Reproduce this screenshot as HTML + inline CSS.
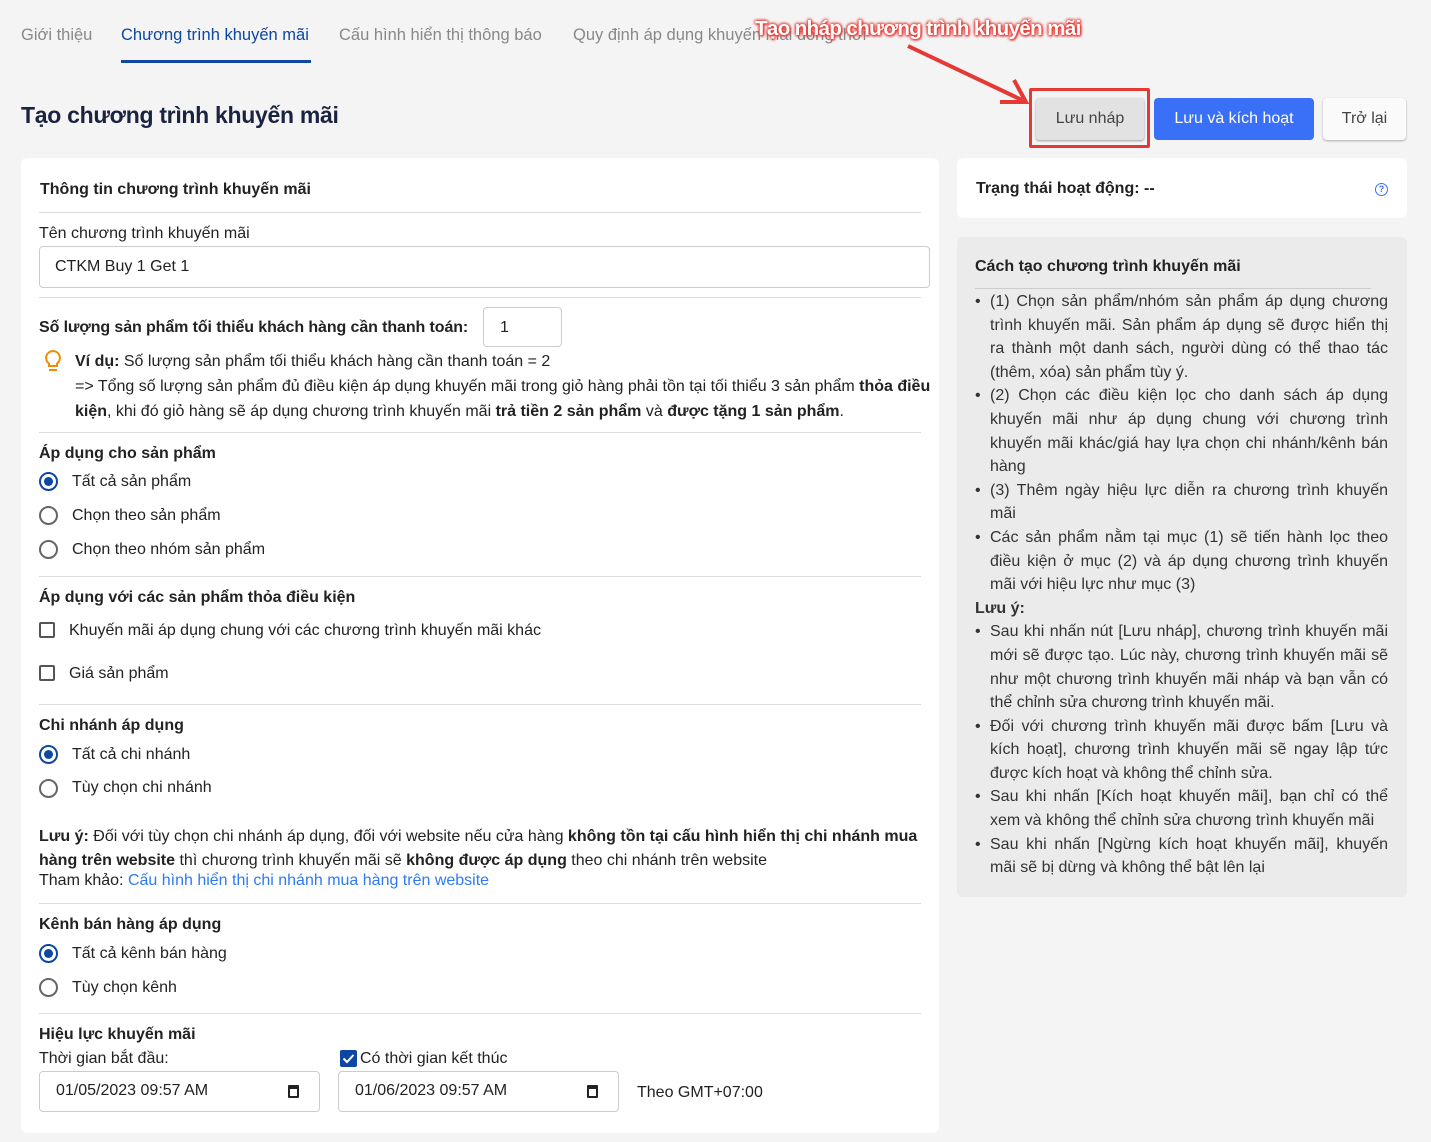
<!DOCTYPE html>
<html><head><meta charset="utf-8"><style>
*{box-sizing:border-box;margin:0;padding:0}
body{width:1431px;height:1142px;background:#f4f4f4;font-family:"Liberation Sans",sans-serif;color:#222;position:relative;overflow:hidden;font-size:16px}
.a{position:absolute;white-space:nowrap}
.b{font-weight:bold}
.card{position:absolute;background:#fff;border-radius:6px}
.hr{position:absolute;height:1px;background:#ddd}
.radio{position:absolute;width:19px;height:19px;border:2px solid #666;border-radius:50%}
.radio.on{border-color:#0d47a1}
.radio.on:after{content:"";position:absolute;left:3px;top:3px;width:9px;height:9px;border-radius:50%;background:#0d47a1}
.chk{position:absolute;width:16px;height:16px;border:2px solid #555;border-radius:2px}
.inp{position:absolute;border:1px solid #ccc;border-radius:4px;background:#fff}
.guide{position:absolute;left:975px;width:413px;font-size:16px;line-height:23.6px;text-align:justify;color:#333}
.guide li{list-style:none;position:relative;padding-left:15px}
.guide li:before{content:"•";position:absolute;left:0}
</style></head><body>
<div class="a" style="left:21px;top:26px;color:#888;font-size:16.5px">Giới thiệu</div>
<div class="a" style="left:121px;top:26px;color:#0d47a1;font-size:16.5px">Chương trình khuyến mãi</div>
<div style="position:absolute;left:121px;top:60px;width:190px;height:3px;background:#0d47a1"></div>
<div class="a" style="left:339px;top:26px;color:#888;font-size:16.5px">Cấu hình hiển thị thông báo</div>
<div class="a" style="left:573px;top:26px;color:#888;font-size:16.5px">Quy định áp dụng khuyến mãi đồng thời</div>
<div class="a" style="left:755px;top:17px;color:#fff;font-size:20.5px;font-weight:bold;text-shadow:0 0 3px #e53935,0 0 3px #e53935,0 0 3px #e53935,1px 1px 2px #e53935;letter-spacing:-0.6px">Tạo nháp chương trình khuyến mãi</div>
<svg style="position:absolute;left:900px;top:40px" width="140" height="70"><line x1="8" y1="6" x2="122" y2="60" stroke="#e53935" stroke-width="4"/><polyline points="100,62 126,62 114,40" fill="none" stroke="#e53935" stroke-width="4"/></svg>
<div class="a" style="left:21px;top:102px;font-size:23px;font-weight:bold;color:#1a2340;letter-spacing:-0.3px">Tạo chương trình khuyến mãi</div>
<div style="position:absolute;left:1029px;top:88px;width:121px;height:60px;border:3px solid #e53935;border-radius:2px"></div>
<div style="position:absolute;left:1036px;top:98px;width:108px;height:42px;background:#e2e2e2;border-radius:3px;box-shadow:0 1px 2px #999;text-align:center;line-height:42px;font-size:16px;color:#444">Lưu nháp</div>
<div style="position:absolute;left:1154px;top:98px;width:160px;height:42px;background:#3a6ff7;border-radius:4px;text-align:center;line-height:42px;font-size:16px;color:#fff">Lưu và kích hoạt</div>
<div style="position:absolute;left:1323px;top:98px;width:83px;height:42px;background:#fafafa;border-radius:4px;box-shadow:0 1px 2px #aaa;text-align:center;line-height:42px;font-size:16px;color:#444">Trở lại</div>

<div class="card" style="left:21px;top:158px;width:918px;height:975px"></div>
<div class="a b" style="left:40px;top:181px">Thông tin chương trình khuyến mãi</div>
<div class="hr" style="left:39px;top:212px;width:882px"></div>
<div class="a" style="left:39px;top:225px">Tên chương trình khuyến mãi</div>
<div class="inp" style="left:39px;top:246px;width:891px;height:42px"></div>
<div class="a" style="left:55px;top:258px">CTKM Buy 1 Get 1</div>
<div class="hr" style="left:39px;top:297px;width:882px"></div>
<div class="a b" style="left:39px;top:319px;font-size:16px;letter-spacing:-0.1px">Số lượng sản phẩm tối thiểu khách hàng cần thanh toán:</div>
<div class="inp" style="left:483px;top:307px;width:79px;height:40px"></div>
<div class="a" style="left:500px;top:319px">1</div>
<svg style="position:absolute;left:42px;top:348px" width="22" height="26"><path d="M11 3a7 7 0 0 0-4 12.7V18h8v-2.3A7 7 0 0 0 11 3z" fill="none" stroke="#f08c00" stroke-width="2"/><line x1="7" y1="22" x2="15" y2="22" stroke="#f08c00" stroke-width="2"/></svg>
<div class="a" style="left:75px;top:349px;line-height:25px;font-size:16px"><b>Ví dụ:</b> Số lượng sản phẩm tối thiểu khách hàng cần thanh toán = 2<br>=&gt; Tổng số lượng sản phẩm đủ điều kiện áp dụng khuyến mãi trong giỏ hàng phải tồn tại tối thiểu 3 sản phẩm <b>thỏa điều</b><br><b>kiện</b>, khi đó giỏ hàng sẽ áp dụng chương trình khuyến mãi <b>trả tiền 2 sản phẩm</b> và <b>được tặng 1 sản phẩm</b>.</div>
<div class="hr" style="left:39px;top:432px;width:882px"></div>
<div class="a b" style="left:39px;top:445px;font-size:16px">Áp dụng cho sản phẩm</div>
<div class="radio on" style="left:39px;top:472px"></div><div class="a" style="left:72px;top:473px">Tất cả sản phẩm</div>
<div class="radio" style="left:39px;top:506px"></div><div class="a" style="left:72px;top:507px">Chọn theo sản phẩm</div>
<div class="radio" style="left:39px;top:540px"></div><div class="a" style="left:72px;top:541px">Chọn theo nhóm sản phẩm</div>
<div class="hr" style="left:39px;top:576px;width:882px"></div>
<div class="a b" style="left:39px;top:589px;font-size:16px">Áp dụng với các sản phẩm thỏa điều kiện</div>
<div class="chk" style="left:39px;top:622px"></div><div class="a" style="left:69px;top:622px">Khuyến mãi áp dụng chung với các chương trình khuyến mãi khác</div>
<div class="chk" style="left:39px;top:665px"></div><div class="a" style="left:69px;top:665px">Giá sản phẩm</div>
<div class="hr" style="left:39px;top:704px;width:882px"></div>
<div class="a b" style="left:39px;top:717px;font-size:16px">Chi nhánh áp dụng</div>
<div class="radio on" style="left:39px;top:745px"></div><div class="a" style="left:72px;top:746px">Tất cả chi nhánh</div>
<div class="radio" style="left:39px;top:779px"></div><div class="a" style="left:72px;top:779px">Tùy chọn chi nhánh</div>
<div class="a" style="left:39px;top:825px;line-height:24px;font-size:16px"><b>Lưu ý:</b> Đối với tùy chọn chi nhánh áp dụng, đối với website nếu cửa hàng <b>không tồn tại cấu hình hiển thị chi nhánh mua</b><br><b>hàng trên website</b> thì chương trình khuyến mãi sẽ <b>không được áp dụng</b> theo chi nhánh trên website</div>
<div class="a" style="left:39px;top:872px;font-size:16px">Tham khảo: <span style="color:#2f7af0">Cấu hình hiển thị chi nhánh mua hàng trên website</span></div>
<div class="hr" style="left:39px;top:903px;width:882px"></div>
<div class="a b" style="left:39px;top:916px;font-size:16px">Kênh bán hàng áp dụng</div>
<div class="radio on" style="left:39px;top:944px"></div><div class="a" style="left:72px;top:945px">Tất cả kênh bán hàng</div>
<div class="radio" style="left:39px;top:978px"></div><div class="a" style="left:72px;top:979px">Tùy chọn kênh</div>
<div class="hr" style="left:39px;top:1013px;width:882px"></div>
<div class="a b" style="left:39px;top:1026px;font-size:16px">Hiệu lực khuyến mãi</div>
<div class="a" style="left:39px;top:1050px">Thời gian bắt đầu:</div>
<div style="position:absolute;left:340px;top:1050px;width:17px;height:17px;background:#0d47a1;border-radius:2px"><svg width="17" height="17"><path d="M3.5 8.5l3.5 3.5 6.5-7" fill="none" stroke="#fff" stroke-width="2"/></svg></div>
<div class="a" style="left:360px;top:1050px">Có thời gian kết thúc</div>
<div class="inp" style="left:39px;top:1071px;width:281px;height:41px"></div>
<div class="a" style="left:56px;top:1082px">01/05/2023 09:57 AM</div>
<div style="position:absolute;left:288px;top:1085px;width:11px;height:13px;border:2px solid #222;border-top-width:4px;border-radius:1px"></div>
<div class="inp" style="left:338px;top:1071px;width:281px;height:41px"></div>
<div class="a" style="left:355px;top:1082px">01/06/2023 09:57 AM</div>
<div style="position:absolute;left:587px;top:1085px;width:11px;height:13px;border:2px solid #222;border-top-width:4px;border-radius:1px"></div>
<div class="a" style="left:637px;top:1084px">Theo GMT+07:00</div>

<div class="card" style="left:957px;top:158px;width:450px;height:60px"></div>
<div class="a b" style="left:976px;top:180px">Trạng thái hoạt động: --</div>
<div style="position:absolute;left:1375px;top:183px;width:13px;height:13px;border:1.5px solid #3a6ff7;border-radius:50%;color:#3a6ff7;font-size:9px;font-weight:bold;text-align:center;line-height:10px">?</div>
<div style="position:absolute;left:957px;top:237px;width:450px;height:660px;background:#ebebec;border-radius:6px"></div>
<div class="a b" style="left:975px;top:258px">Cách tạo chương trình khuyến mãi</div>
<div class="hr" style="left:975px;top:288px;width:396px;background:#ccc"></div>
<div class="guide" style="top:290px">
<ul>
<li>(1) Chọn sản phẩm/nhóm sản phẩm áp dụng chương trình khuyến mãi. Sản phẩm áp dụng sẽ được hiển thị ra thành một danh sách, người dùng có thể thao tác (thêm, xóa) sản phẩm tùy ý.</li>
<li>(2) Chọn các điều kiện lọc cho danh sách áp dụng khuyến mãi như áp dụng chung với chương trình khuyến mãi khác/giá hay lựa chọn chi nhánh/kênh bán hàng</li>
<li>(3) Thêm ngày hiệu lực diễn ra chương trình khuyến mãi</li>
<li>Các sản phẩm nằm tại mục (1) sẽ tiến hành lọc theo điều kiện ở mục (2) và áp dụng chương trình khuyến mãi với hiệu lực như mục (3)</li>
</ul>
<div class="b">Lưu ý:</div>
<ul>
<li>Sau khi nhấn nút [Lưu nháp], chương trình khuyến mãi mới sẽ được tạo. Lúc này, chương trình khuyến mãi sẽ như một chương trình khuyến mãi nháp và bạn vẫn có thể chỉnh sửa chương trình khuyến mãi.</li>
<li>Đối với chương trình khuyến mãi được bấm [Lưu và kích hoạt], chương trình khuyến mãi sẽ ngay lập tức được kích hoạt và không thể chỉnh sửa.</li>
<li>Sau khi nhấn [Kích hoạt khuyến mãi], bạn chỉ có thể xem và không thể chỉnh sửa chương trình khuyến mãi</li>
<li>Sau khi nhấn [Ngừng kích hoạt khuyến mãi], khuyến mãi sẽ bị dừng và không thể bật lên lại</li>
</ul>
</div>
</body></html>
